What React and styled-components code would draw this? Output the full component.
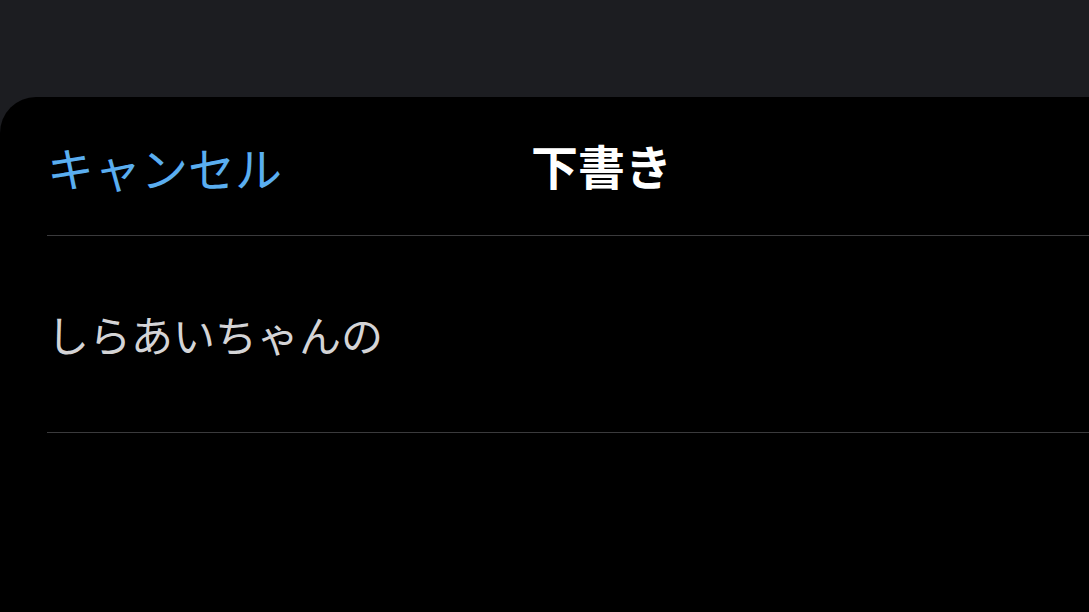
import React from "react";
import styled, { createGlobalStyle } from "styled-components";

const GlobalStyle = createGlobalStyle`
  html, body {
    margin: 0;
    padding: 0;
    background: #1c1d21;
    overflow: hidden;
  }
  body {
    font-family: "Noto Sans CJK JP", "Noto Sans", sans-serif;
  }
`;

const Screen = styled.div`
  width: 1089px;
  height: 612px;
  background: #1c1d21;
  overflow: hidden;
  padding-top: 97px;
  box-sizing: border-box;
`;

const Sheet = styled.div`
  width: 1202px;
  height: 515px;
  background: #000;
  border-top-left-radius: 36px;
  border-top-right-radius: 36px;
`;

const Header = styled.div`
  position: relative;
  display: flex;
  align-items: center;
  height: 139px;
  margin-left: 47px;
  border-bottom: 1px solid #3a3a3c;
  box-sizing: border-box;
`;

const CancelButton = styled.button`
  background: none;
  border: none;
  padding: 0;
  color: #5aaef0;
  font-family: inherit;
  font-size: 47px;
  line-height: 1;
  cursor: pointer;
`;

const Title = styled.h1`
  position: absolute;
  left: calc(50% - 23px);
  transform: translate(-50%, -2px);
  margin: 0;
  color: #fff;
  font-size: 47px;
  font-weight: 700;
  line-height: 1;
`;

const DraftRow = styled.div`
  display: flex;
  align-items: center;
  height: 197px;
  margin-left: 47px;
  border-bottom: 1px solid #3a3a3c;
  box-sizing: border-box;
  color: #d4d4d6;
  font-size: 42px;
  padding-bottom: 2px;
`;

export default function App() {
  return (
    <>
      <GlobalStyle />
      <Screen>
        <Sheet>
          <Header>
            <CancelButton>キャンセル</CancelButton>
            <Title>下書き</Title>
          </Header>
          <DraftRow>しらあいちゃんの</DraftRow>
        </Sheet>
      </Screen>
    </>
  );
}
